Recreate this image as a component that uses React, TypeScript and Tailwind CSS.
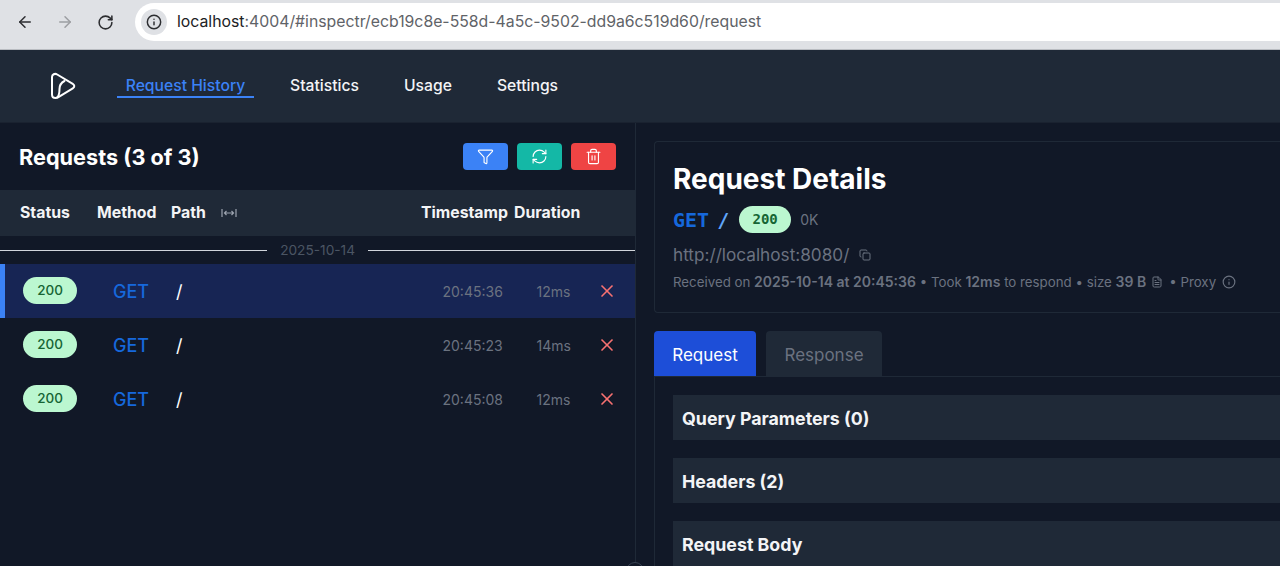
import React from 'react';
import { ArrowLeft, ArrowRight, RotateCw, Info, Filter, RefreshCw, Trash2, X, Copy, FileText } from 'lucide-react';

const font = { fontFamily: 'Inter, "Liberation Sans", sans-serif' };
const mono = { fontFamily: '"DejaVu Sans Mono", monospace' };

const requests = [
  { time: '20:45:36', duration: '12ms', active: true },
  { time: '20:45:23', duration: '14ms', active: false },
  { time: '20:45:08', duration: '12ms', active: false },
];

function Logo() {
  return (
    <svg width="26" height="28" viewBox="0 0 26 28" fill="none" stroke="white" strokeWidth="2" strokeLinejoin="round" strokeLinecap="round">
      <path d="M5.5 26 C3.5 26 2 24.5 2 22.5 L2 5 C2 2.5 4.8 1 7.2 2.5 L22.8 11.8 C24.8 13 24.8 15.2 22.8 16.4 L8 25.4 C7.3 25.8 6.3 26 5.5 26 Z" />
      <path d="M7 25.5 C9 24 9.5 21 9.5 17 C9.5 13 11.5 10.5 14.5 9" />
    </svg>
  );
}

function StatusPill() {
  return (
    <span className="mb-[2px] flex h-[27px] w-[54px] items-center justify-center rounded-full bg-[#bbf7d0] text-[13.5px] font-medium text-[#166534]">
      200
    </span>
  );
}

function BrowserBar() {
  return (
    <div className="flex h-[50px] items-start border-b border-[#b9bcc1] bg-[#dfe1e5]">
      <div className="flex h-[44px] items-center pl-[16px] text-[#2c2d30]">
        <ArrowLeft size={18} strokeWidth={2} />
        <ArrowRight size={18} strokeWidth={2} className="ml-[22px] text-[#9c9ea2]" />
        <RotateCw size={17} strokeWidth={2.2} className="ml-[23px]" />
      </div>
      <div className="ml-[21px] mt-[3px] flex h-[38px] flex-1 items-center rounded-l-full bg-white pl-[6px]">
        <span className="flex h-[26px] w-[26px] items-center justify-center rounded-full bg-[#dfe1e5] text-[#2c2d30]">
          <Info size={16} strokeWidth={2.2} />
        </span>
        <span className="ml-[10px] text-[15.8px] text-[#5f6368]">
          <span className="text-[#202124]">localhost</span>:4004/#inspectr/ecb19c8e-558d-4a5c-9502-dd9a6c519d60/request
        </span>
      </div>
    </div>
  );
}

function NavBar() {
  return (
    <nav className="flex h-[73px] items-center border-b border-[#1a2230] bg-[#1f2937] pl-[50px] text-[15.7px] font-medium text-[#f3f4f6]">
      <Logo />
      <div className="ml-[41px] flex h-[24px] w-[137px] items-center justify-center border-b-2 border-[#3b82f6] pt-[2px] text-[#3b82f6]">Request History</div>
      <span className="ml-[36px]">Statistics</span>
      <span className="ml-[45px]">Usage</span>
      <span className="ml-[45px]">Settings</span>
    </nav>
  );
}

function RequestList() {
  return (
    <section className="relative w-[636px] shrink-0 border-r border-[#1f2937]">
      <div className="flex h-[67px] items-center justify-between px-[19px]">
        <h2 className="mt-[2px] text-[21.7px] font-bold text-white">Requests (3 of 3)</h2>
        <div className="mb-[1px] flex gap-[9px] text-white">
          <button className="flex h-[27px] w-[45px] items-center justify-center rounded bg-[#3b82f6]"><Filter size={17} strokeWidth={1.6} /></button>
          <button className="flex h-[27px] w-[45px] items-center justify-center rounded bg-[#14b8a6]"><RefreshCw size={17} strokeWidth={1.6} /></button>
          <button className="flex h-[27px] w-[45px] items-center justify-center rounded bg-[#ef4444]"><Trash2 size={17} strokeWidth={1.6} /></button>
        </div>
      </div>
      <div className="flex h-[46px] items-center bg-[#1f2937] pb-[1px] text-[15.8px] font-bold text-[#f3f4f6]">
        <span className="ml-[20px] w-[77px]">Status</span>
        <span className="w-[74px]">Method</span>
        <span className="w-[50px]">Path</span>
        <span className="flex w-[200px] items-center text-[#9ca3af]">
          <svg width="16" height="10" viewBox="0 0 16 10" fill="none" stroke="currentColor" strokeWidth="1.2">
            <path d="M1 1v8M15 1v8M3.5 5h9M5.5 3L3.5 5l2 2M10.5 3l2 2-2 2" />
          </svg>
        </span>
        <span className="w-[93px]">Timestamp</span>
        <span>Duration</span>
      </div>
      <div className="flex h-[28px] items-center">
        <div className="h-px flex-1 bg-[#d1d5db]" />
        <span className="px-[13px] text-[13.7px] text-[#4b5563]">2025-10-14</span>
        <div className="h-px w-[267px] bg-[#d1d5db]" />
      </div>
      {requests.map((r) => (
        <div key={r.time} className={`flex h-[54px] items-center ${r.active ? 'border-l-[5px] border-[#3b82f6] bg-[#172554] pl-[18px]' : 'pl-[23px]'}`}>
          <StatusPill />
          <span className="ml-[36px] w-[63px] text-[18px] font-medium text-[#1668dc]">GET</span>
          <span className="text-[18px] text-white">/</span>
          <span className="ml-[260px] w-[94px] text-[14px] text-[#6b7280]">{r.time}</span>
          <span className="w-[60px] text-[14px] text-[#6b7280]">{r.duration}</span>
          <X size={20} strokeWidth={2} className="text-[#f87171]" />
        </div>
      ))}
      {/* resize handle peeking in at the bottom */}
      <span className="absolute right-[-9px] top-[439px] h-[18px] w-[18px] rounded-full border border-[#374151] bg-[#111827]" />
    </section>
  );
}

function Details() {
  return (
    <section className="min-w-0 flex-1 pl-[18px] pt-[18px]">
      <div className="h-[172px] rounded-l border border-r-0 border-[#1f2937] pl-[18px] pt-[19px]">
        <h1 className="text-[28px] font-bold leading-[36px] text-white">Request Details</h1>
        <div className="mt-[9px] flex h-[27px] items-center">
          <span className="text-[20px] font-bold text-[#1668dc]" style={mono}>GET</span>
          <span className="ml-[8px] mr-[10px] text-[20px] font-bold text-[#60a5fa]" style={mono}>/</span>
          <span className="flex h-[27px] w-[52px] items-center justify-center rounded-full bg-[#bbf7d0] text-[14px] font-bold text-[#166534]" style={mono}>200</span>
          <span className="ml-[9px] text-[14px] text-[#6b7280]">0K</span>
        </div>
        <div className="mt-[10px] flex items-center text-[17.2px] leading-[24px] text-[#6b7280]">
          http://localhost:8080/
          <Copy size={12} className="ml-[10px]" />
        </div>
        <div className="mt-[5px] flex items-center text-[13.3px] leading-[20px] text-[#6b7280]">
          <span>Received on <b className="text-[14px] font-semibold">2025-10-14 at 20:45:36</b> • Took <b className="text-[14px] font-semibold">12ms</b> to respond • size <b className="text-[14px] font-semibold">39 B</b></span>
          <FileText size={12} className="ml-[5px] mr-[6px]" />
          <span>• Proxy</span>
          <Info size={14} className="ml-[6px]" />
        </div>
      </div>
      <div className="mt-[18px] flex gap-[10px] text-[17px]">
        <span className="flex h-[45px] w-[102px] items-center justify-center rounded-t bg-[#1d4ed8] pt-[4px] text-white">Request</span>
        <span className="flex h-[45px] w-[116px] items-center justify-center rounded-t bg-[#1f2937] pt-[4px] text-[#6b7280]">Response</span>
      </div>
      <div className="border-l border-t border-[#1f2937] pl-[18px] pt-[18px]">
        {['Query Parameters (0)', 'Headers (2)', 'Request Body'].map((label) => (
          <div key={label} className="mb-[18px] flex h-[45px] items-center bg-[#1f2937] pl-[9px] pt-[3px] text-[17.8px] font-bold text-[#f3f4f6]">{label}</div>
        ))}
      </div>
    </section>
  );
}

export default function App() {
  return (
    <div className="h-[566px] w-[1280px] overflow-hidden bg-[#111827]" style={font}>
      <BrowserBar />
      <NavBar />
      <div className="flex">
        <RequestList />
        <Details />
      </div>
    </div>
  );
}
